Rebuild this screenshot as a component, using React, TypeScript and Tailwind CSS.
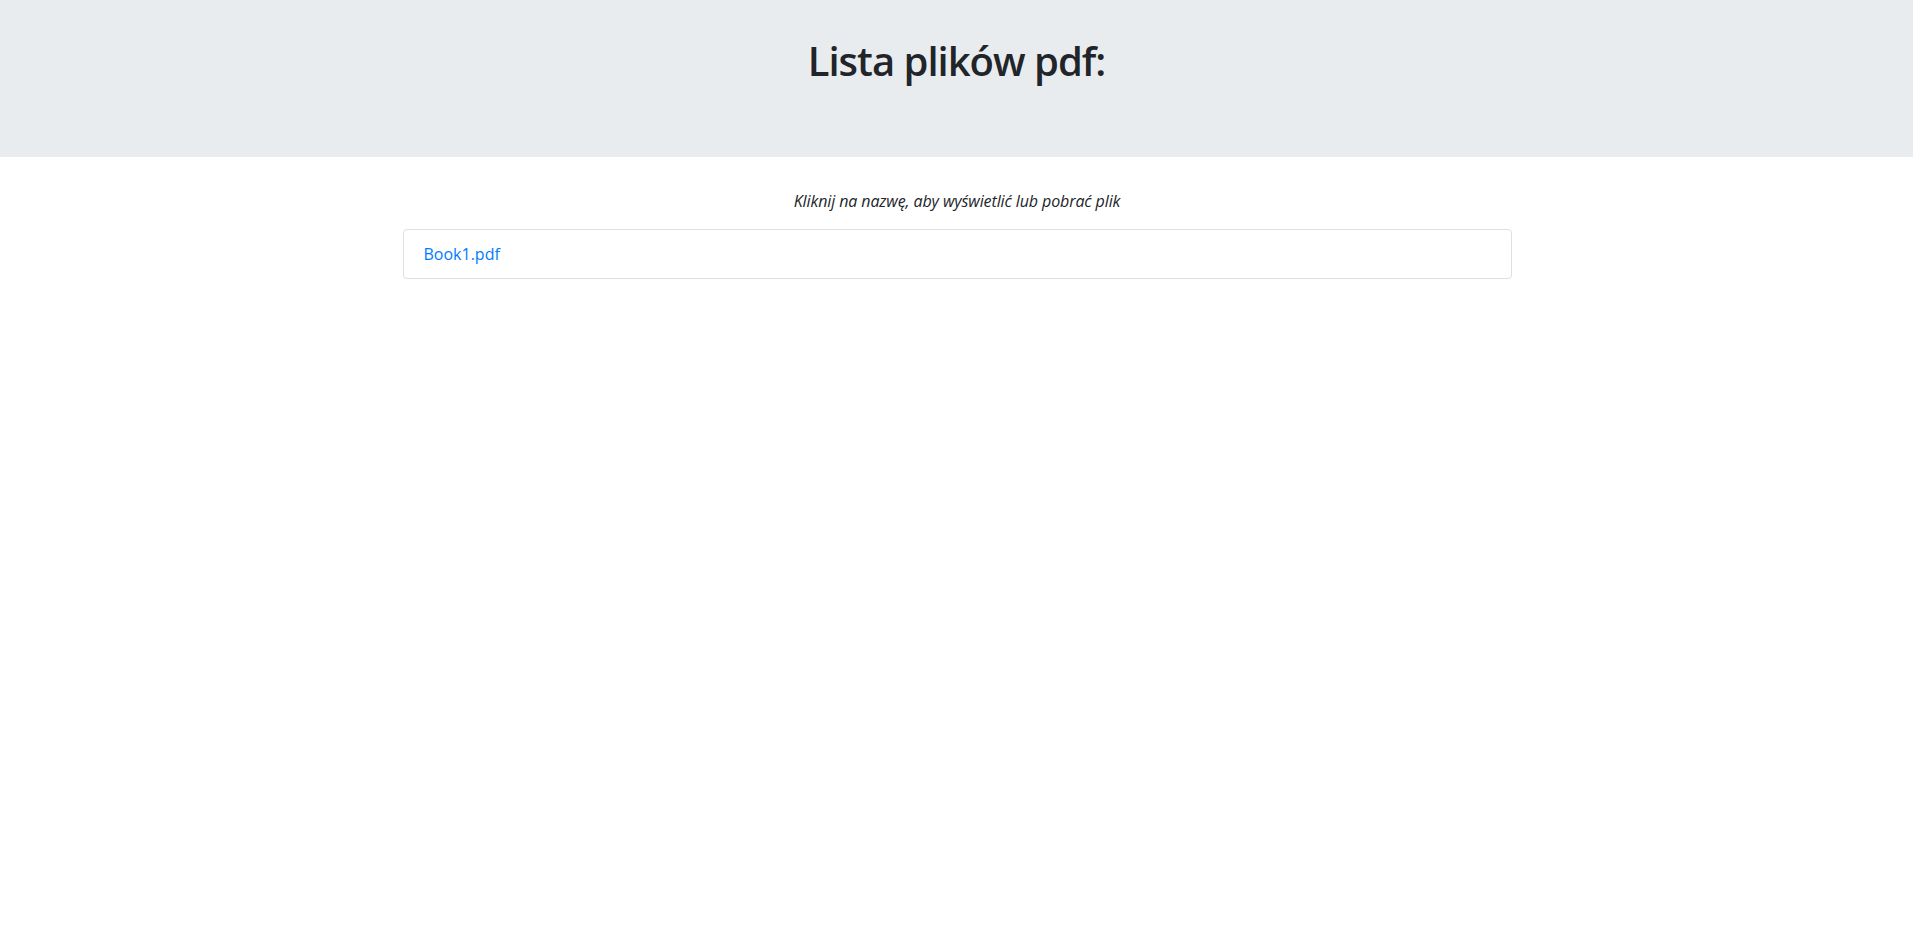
import React from "react";

export default function App() {
  return (
    <div className="min-h-[932px] bg-white text-[#212529] font-['Open_Sans',sans-serif]">
      <header className="bg-[#e9ecef] h-[157px] pt-[37px] mb-8">
        <h1 className="text-center text-[40px] leading-[48px] font-semibold tracking-[-1px] text-[#212529]">
          Lista plików pdf:
        </h1>
      </header>
      <main className="w-[1110px] mx-auto pl-[1px]">
        <p className="text-center italic text-[16px] leading-6 mb-4 tracking-[-0.1px]">
          Kliknij na nazwę, aby wyświetlić lub pobrać plik
        </p>
        <ul className="border border-[#dfdfdf] rounded">
          <li className="px-5 py-3 leading-6 text-[16px]">
            <a href="#" className="text-[#007bff]">Book1.pdf</a>
          </li>
        </ul>
      </main>
    </div>
  );
}
